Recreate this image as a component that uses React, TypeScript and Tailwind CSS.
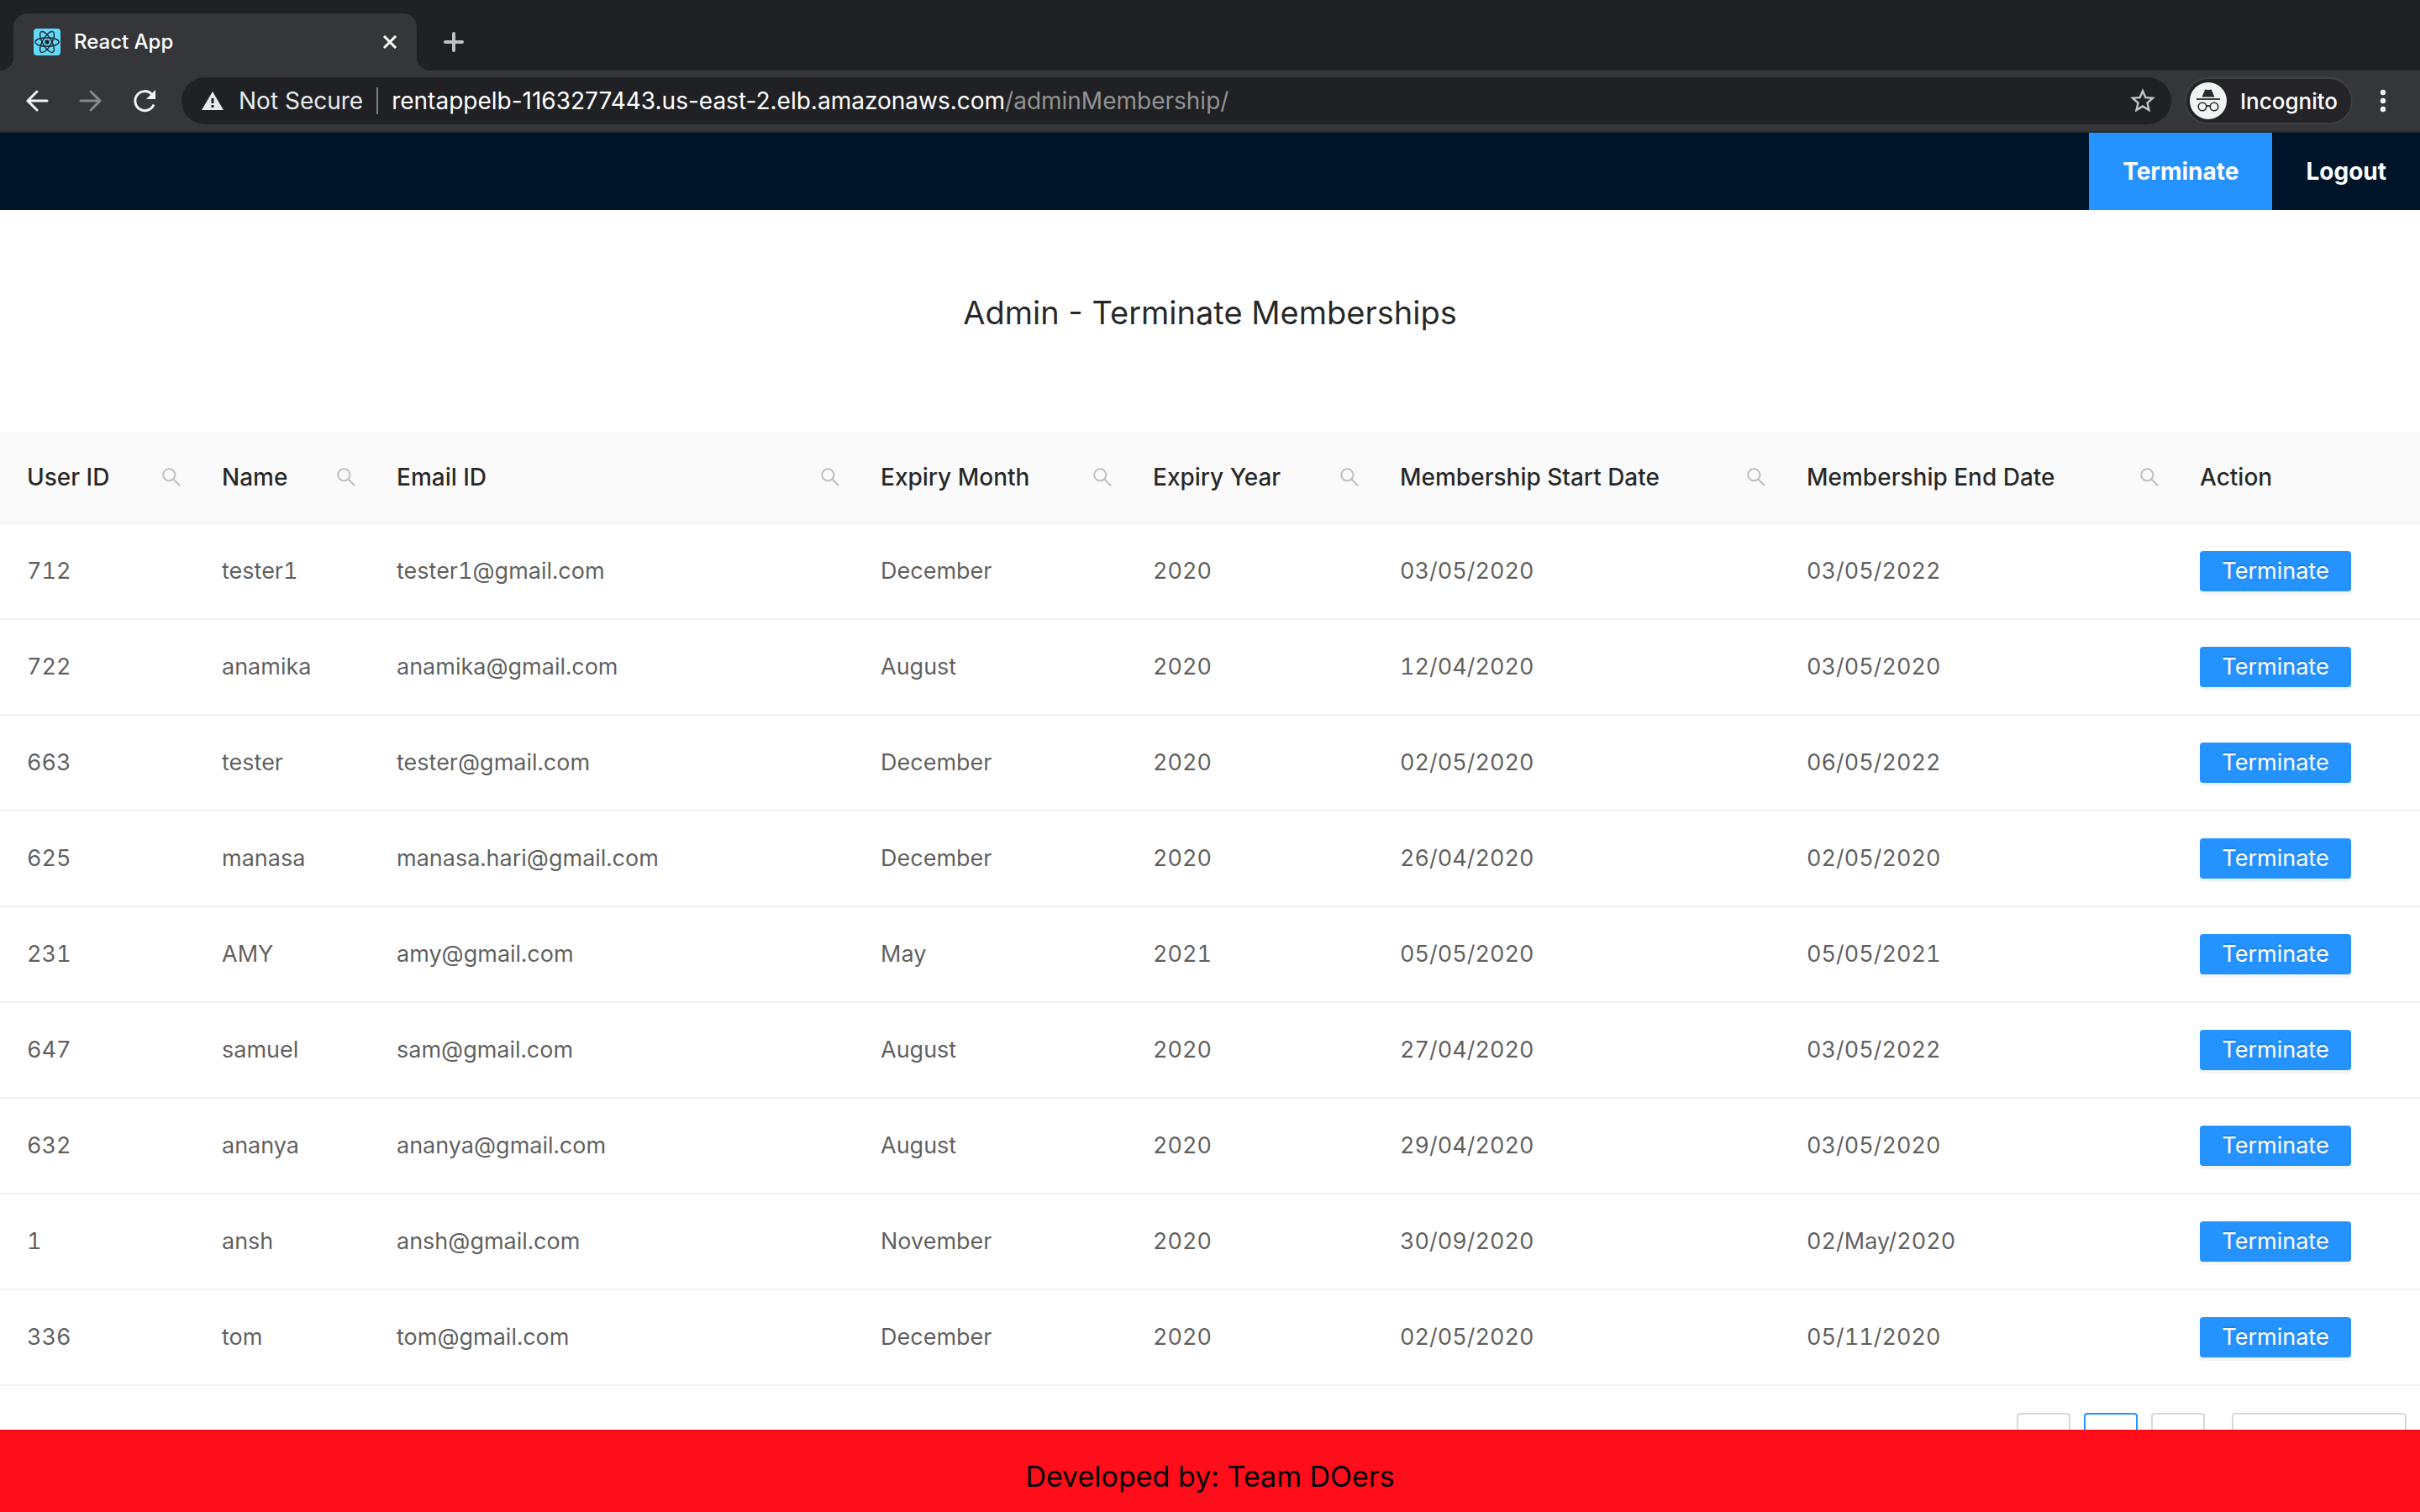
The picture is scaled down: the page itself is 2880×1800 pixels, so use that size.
import type { ReactNode } from "react";

type Member = {
  id: string;
  name: string;
  email: string;
  month: string;
  year: string;
  start: string;
  end: string;
};

const members: Member[] = [
  { id: "712", name: "tester1", email: "tester1@gmail.com", month: "December", year: "2020", start: "03/05/2020", end: "03/05/2022" },
  { id: "722", name: "anamika", email: "anamika@gmail.com", month: "August", year: "2020", start: "12/04/2020", end: "03/05/2020" },
  { id: "663", name: "tester", email: "tester@gmail.com", month: "December", year: "2020", start: "02/05/2020", end: "06/05/2022" },
  { id: "625", name: "manasa", email: "manasa.hari@gmail.com", month: "December", year: "2020", start: "26/04/2020", end: "02/05/2020" },
  { id: "231", name: "AMY", email: "amy@gmail.com", month: "May", year: "2021", start: "05/05/2020", end: "05/05/2021" },
  { id: "647", name: "samuel", email: "sam@gmail.com", month: "August", year: "2020", start: "27/04/2020", end: "03/05/2022" },
  { id: "632", name: "ananya", email: "ananya@gmail.com", month: "August", year: "2020", start: "29/04/2020", end: "03/05/2020" },
  { id: "1", name: "ansh", email: "ansh@gmail.com", month: "November", year: "2020", start: "30/09/2020", end: "02/May/2020" },
  { id: "336", name: "tom", email: "tom@gmail.com", month: "December", year: "2020", start: "02/05/2020", end: "05/11/2020" },
];

const columns = [
  { title: "User ID", width: "w-[232px]" },
  { title: "Name", width: "w-[208px]" },
  { title: "Email ID", width: "w-[576px]" },
  { title: "Expiry Month", width: "w-[324px]" },
  { title: "Expiry Year", width: "w-[294px]" },
  { title: "Membership Start Date", width: "w-[484px]" },
  { title: "Membership End Date", width: "w-[468px]" },
];

function ReactLogo() {
  return (
    <svg viewBox="0 0 32 32" className="size-8 shrink-0" aria-hidden="true">
      <rect width="32" height="32" rx="4" fill="#61dafb" />
      <g fill="none" stroke="#20232a" strokeWidth="1.4">
        <ellipse cx="16" cy="16" rx="14" ry="5.3" />
        <ellipse cx="16" cy="16" rx="14" ry="5.3" transform="rotate(60 16 16)" />
        <ellipse cx="16" cy="16" rx="14" ry="5.3" transform="rotate(120 16 16)" />
      </g>
      <circle cx="16" cy="16" r="2.7" fill="#20232a" />
    </svg>
  );
}

function SearchIcon() {
  return (
    <svg viewBox="64 64 896 896" className="size-6" fill="currentColor" aria-hidden="true">
      <path d="M909.6 854.5L649.9 594.8C690.2 542.7 712 479 712 412c0-80.2-31.3-155.4-87.9-212.1-56.6-56.7-132-87.9-212.1-87.9s-155.5 31.3-212.1 87.9C143.2 256.5 112 331.8 112 412c0 80.1 31.3 155.5 87.9 212.1C256.5 680.8 331.8 712 412 712c67 0 130.6-21.8 182.7-62l259.7 259.6a8.2 8.2 0 0 0 11.6 0l43.6-43.5a8.2 8.2 0 0 0 0-11.6zM570.4 570.4C528 612.7 471.8 636 412 636s-116-23.3-158.4-65.6C211.3 528 188 471.8 188 412s23.3-116.1 65.6-158.4C296 211.3 352.2 188 412 188s116.1 23.2 158.4 65.6S636 352.2 636 412s-23.3 116.1-65.6 158.4z" />
    </svg>
  );
}

function ToolbarButton({ label, children }: { label: string; children: ReactNode }) {
  return (
    <button type="button" aria-label={label} className="grid size-8 place-items-center">
      {children}
    </button>
  );
}

function TabStrip() {
  return (
    <div className="flex h-[84px] items-end bg-[#202124] pl-4">
      <div className="relative flex h-[68px] w-[480px] items-center rounded-t-2xl bg-[#35363a] pr-6 pl-6">
        <span className="absolute bottom-0 -left-4 size-4 bg-[radial-gradient(circle_at_0_0,#202124_16px,#35363a_16px)]" />
        <span className="absolute -right-4 bottom-0 size-4 bg-[radial-gradient(circle_at_100%_0,#202124_16px,#35363a_16px)]" />
        <ReactLogo />
        <span className="ml-4 flex-1 text-2xl font-medium text-white">React App</span>
        <button type="button" aria-label="Close tab">
          <svg viewBox="0 0 16 16" className="size-4" stroke="#fff" strokeWidth="3" aria-hidden="true">
            <path d="M1 1l14 14M15 1L1 15" />
          </svg>
        </button>
      </div>
      <button type="button" aria-label="New tab" className="ml-8 grid h-[68px] place-items-center">
        <svg viewBox="0 0 24 24" className="size-6" stroke="#bdc1c6" strokeWidth="4" strokeLinecap="round" aria-hidden="true">
          <path d="M12 2v20M2 12h20" />
        </svg>
      </button>
    </div>
  );
}

function Toolbar() {
  return (
    <div className="flex h-[74px] items-center border-b-2 border-[#28292c] bg-[#35363a] pr-10 pl-7">
      <div className="flex gap-8">
        <ToolbarButton label="Back">
          <svg viewBox="0 0 32 32" className="size-8" fill="none" stroke="#f1f3f4" strokeWidth="3" strokeLinecap="round" aria-hidden="true">
            <path d="M28 16H5M16 5L5 16l11 11" />
          </svg>
        </ToolbarButton>
        <ToolbarButton label="Forward">
          <svg viewBox="0 0 32 32" className="size-8" fill="none" stroke="#87888a" strokeWidth="3" strokeLinecap="round" aria-hidden="true">
            <path d="M4 16h23M16 5l11 11-11 11" />
          </svg>
        </ToolbarButton>
        <ToolbarButton label="Reload">
          <svg viewBox="0 0 32 32" className="size-8" aria-hidden="true">
            <path d="M27 20.500A11.500 11.500 0 1 1 24.500 8" fill="none" stroke="#f1f3f4" strokeWidth="3" />
            <path d="M29 3v11H18z" fill="#f1f3f4" />
          </svg>
        </ToolbarButton>
      </div>
      <div className="ml-7 flex h-14 flex-1 items-center rounded-full bg-[#202124] pr-4 pl-6">
        <svg viewBox="0 0 26 22" className="h-[22px] w-[26px] shrink-0" aria-hidden="true">
          <path d="M13 0l13 22H0z" fill="#e8eaed" />
          <path d="M13 8v6M13 16v3" stroke="#202124" strokeWidth="3" />
        </svg>
        <span className="ml-[18px] text-[28px] text-[#e8eaed]">Not Secure</span>
        <span className="mx-4 h-8 w-0.5 bg-[#7b7c7f]" />
        <span className="flex-1 text-[28px] text-[#929395]">
          <span className="text-white">rentappelb-1163277443.us-east-2.elb.amazonaws.com</span>
          /adminMembership/
        </span>
        <button type="button" aria-label="Bookmark this page">
          <svg viewBox="0 0 24 24" className="size-9" fill="#c4c5c7" aria-hidden="true">
            <path d="M22 9.240l-7.190-.62L12 2 9.190 8.630 2 9.240l5.460 4.730L5.820 21 12 17.270 18.180 21l-1.630-7.030L22 9.240zM12 15.400l-3.760 2.270 1-4.280-3.320-2.880 4.380-.38L12 6.100l1.710 4.040 4.380.38-3.320 2.880 1 4.280L12 15.400z" />
          </svg>
        </button>
      </div>
      <div className="ml-4 flex h-14 items-center gap-4 rounded-full border-2 border-[#404045] bg-[#242328] pr-4 pl-1">
        <svg viewBox="0 0 44 44" className="size-11" aria-hidden="true">
          <circle cx="22" cy="22" r="22" fill="#f1f3f4" />
          <path d="M14.500 17.500L18 9.200q.4-1 1.500-.7l2.500.8 2.500-.8q1.100-.3 1.500.7l3.500 8.300z" fill="#28292c" />
          <path d="M8 20h28" stroke="#28292c" strokeWidth="1.800" />
          <g fill="none" stroke="#28292c" strokeWidth="1.600">
            <circle cx="15" cy="29" r="4.800" />
            <circle cx="29" cy="29" r="4.800" />
            <path d="M19.800 28.500q2.200-1.200 4.400 0" />
          </g>
        </svg>
        <span className="text-[26px] font-medium text-white">Incognito</span>
      </div>
      <button type="button" aria-label="Browser menu" className="ml-8">
        <svg viewBox="0 0 8 28" className="h-7 w-2" fill="#f1f3f4" aria-hidden="true">
          <circle cx="4" cy="4" r="3.200" />
          <circle cx="4" cy="14" r="3.200" />
          <circle cx="4" cy="24" r="3.200" />
        </svg>
      </button>
    </div>
  );
}

function MembershipTable() {
  return (
    <table className="w-full table-fixed border-separate border-spacing-0 text-left leading-[44px]">
      <colgroup>
        {columns.map((c) => (
          <col key={c.title} className={c.width} />
        ))}
        <col className="w-[294px]" />
      </colgroup>
      <thead className="bg-[#fafafa] text-[28px] text-black/85">
        <tr className="h-[110px] *:border-b-2 *:border-[#f0f0f0]">
          {columns.map((c) => (
            <th key={c.title} scope="col" className="p-0 font-medium whitespace-nowrap">
              <div className="flex items-center justify-between pl-8">
                {c.title}
                <button type="button" aria-label={"Search " + c.title} className="grid w-14 place-items-center text-[#bfbfbf]">
                  <SearchIcon />
                </button>
              </div>
            </th>
          ))}
          <th scope="col" className="px-8 font-medium">Action</th>
        </tr>
      </thead>
      <tbody className="text-[27px] text-black/65 tabular-nums">
        {members.map((m) => (
          <tr key={m.id} className="h-[114px] *:border-b-2 *:border-[#f0f0f0]">
            <td className="px-8">{m.id}</td>
            <td className="px-8">{m.name}</td>
            <td className="px-8">{m.email}</td>
            <td className="px-8">{m.month}</td>
            <td className="px-8">{m.year}</td>
            <td className="px-8">{m.start}</td>
            <td className="px-8">{m.end}</td>
            <td className="px-8">
              <button
                type="button"
                className="flex h-12 w-[180px] items-center justify-center rounded-sm bg-[#2492ff] text-white shadow-[0_4px_0_rgba(0,0,0,0.045)] [text-shadow:0_-2px_0_rgba(0,0,0,0.12)]"
              >
                Terminate
              </button>
            </td>
          </tr>
        ))}
      </tbody>
    </table>
  );
}

function Pagination() {
  return (
    <nav aria-label="Pages" className="flex h-16 justify-end gap-4 pr-4">
      <button type="button" aria-label="Previous page" className="w-16 rounded-sm border-2 border-[#d9d9d9]" />
      <button type="button" aria-label="First page" className="w-16 rounded-sm border-2 border-[#2492ff]" />
      <button type="button" aria-label="Next page" className="w-16 rounded-sm border-2 border-[#d9d9d9]" />
      <select aria-label="Rows per page" className="ml-4 w-52 appearance-none rounded-sm border-2 border-[#d9d9d9] bg-white" />
    </nav>
  );
}

export default function App() {
  return (
    <div className="flex h-screen flex-col overflow-hidden bg-white font-['Inter','Liberation_Sans',sans-serif]">
      <header className="shrink-0">
        <TabStrip />
        <Toolbar />
      </header>
      <nav className="flex h-[92px] shrink-0 justify-end bg-[#001529] text-[28px] font-bold text-white">
        <a href="#terminate" className="flex items-center bg-[#2492ff] px-10">Terminate</a>
        <a href="#logout" className="flex items-center px-10">Logout</a>
      </nav>
      <main className="min-h-0 flex-1 overflow-hidden">
        <h1 className="pt-[98px] pb-[118px] text-center text-[38px] leading-[48px] text-black/85">
          Admin - Terminate Memberships
        </h1>
        <MembershipTable />
        <div className="pt-8">
          <Pagination />
        </div>
      </main>
      <footer className="flex h-[98px] shrink-0 items-center justify-center bg-[#ff0d1a] pt-3 text-[34px] text-black">
        Developed by: Team DOers
      </footer>
    </div>
  );
}
